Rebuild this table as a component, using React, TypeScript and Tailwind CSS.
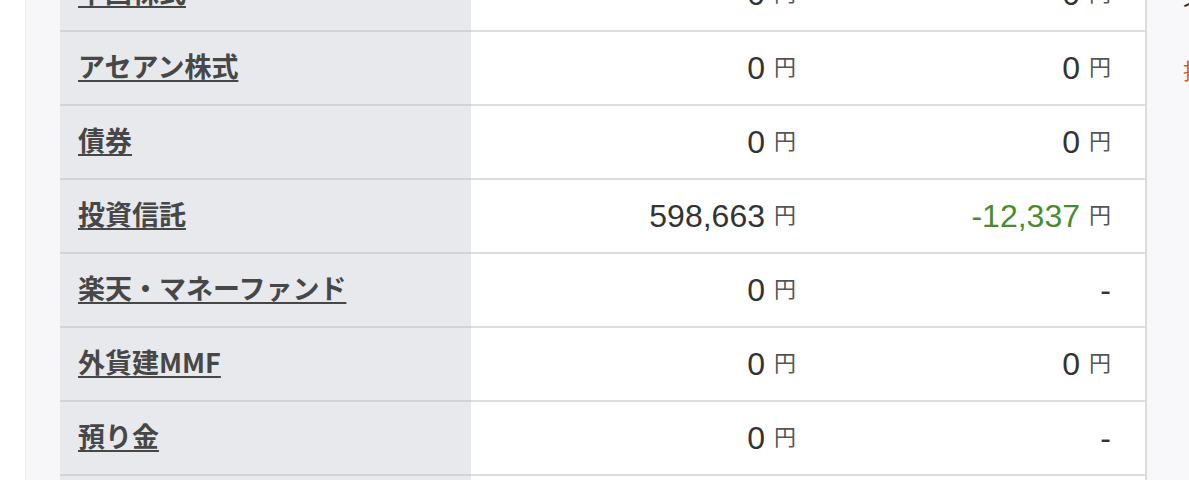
const rows = [
  { label: "中国株式", value: "0", gain: "0" },
  { label: "アセアン株式", value: "0", gain: "0" },
  { label: "債券", value: "0", gain: "0" },
  { label: "投資信託", value: "598,663", gain: "-12,337" },
  { label: "楽天・マネーファンド", value: "0", gain: null },
  { label: "外貨建MMF", value: "0", gain: "0" },
  { label: "預り金", value: "0", gain: null },
  { label: "国内株式", value: "0", gain: "0" },
];

function Yen({ amount, tone = "text-[#333]" }: { amount: string; tone?: string }) {
  return (
    <span className="whitespace-nowrap">
      <span className={`font-['Liberation_Sans',sans-serif] text-[32px] ${tone}`}>{amount}</span>
      <span className="ml-[9px] align-[4px] font-['Noto_Sans_CJK_JP',sans-serif] text-[22px] text-[#555]">円</span>
    </span>
  );
}

function Row({ label, value, gain }: { label: string; value: string; gain: string | null }) {
  const negative = gain !== null && gain.startsWith("-");
  return (
    <div className="grid h-[74px] grid-cols-[411px_359px_315px]">
      <div className="flex items-center border-b-2 border-[#d3d4d8] bg-[#e8e9ed] pb-[4px] pl-[18px]">
        <a className="font-['Noto_Sans_CJK_JP',sans-serif] text-[27px] font-bold text-[#474747] underline decoration-2 underline-offset-[3px]">
          {label}
        </a>
      </div>
      <div className="flex items-center justify-end border-b-2 border-[#dddddf] bg-white pr-[34px]">
        <Yen amount={value} />
      </div>
      <div className="flex items-center justify-end border-b-2 border-[#dddddf] bg-white pr-[34px]">
        {gain === null ? (
          <span className="font-['Liberation_Sans',sans-serif] text-[32px] text-[#333]">-</span>
        ) : (
          <Yen amount={gain} tone={negative ? "text-[#4a8c2c]" : "text-[#333]"} />
        )}
      </div>
    </div>
  );
}

export default function App() {
  return (
    <div className="flex h-[480px] w-[1189px] overflow-hidden bg-white">
      <div className="w-[25px] shrink-0 bg-white" />
      <div className="w-[35px] shrink-0 border-l border-[#ececef] bg-[#f7f7f9]" />
      <div className="mt-[-42px] shrink-0 border-r-2 border-[#dcdcdf]">
        {rows.map((row) => (
          <Row key={row.label} {...row} />
        ))}
      </div>
      <div className="min-w-0 flex-1 overflow-hidden bg-[#f8f8fa] pl-[36px]">
        <div className="mt-[-14px] whitespace-nowrap font-['Noto_Sans_CJK_JP',sans-serif] text-[22px] leading-[26px] text-[#333]">
          名義
        </div>
        <div className="mt-[44px] whitespace-nowrap font-['Noto_Sans_CJK_JP',sans-serif] text-[22px] leading-[26px] text-[#d9572b]">
          損益
        </div>
      </div>
    </div>
  );
}
